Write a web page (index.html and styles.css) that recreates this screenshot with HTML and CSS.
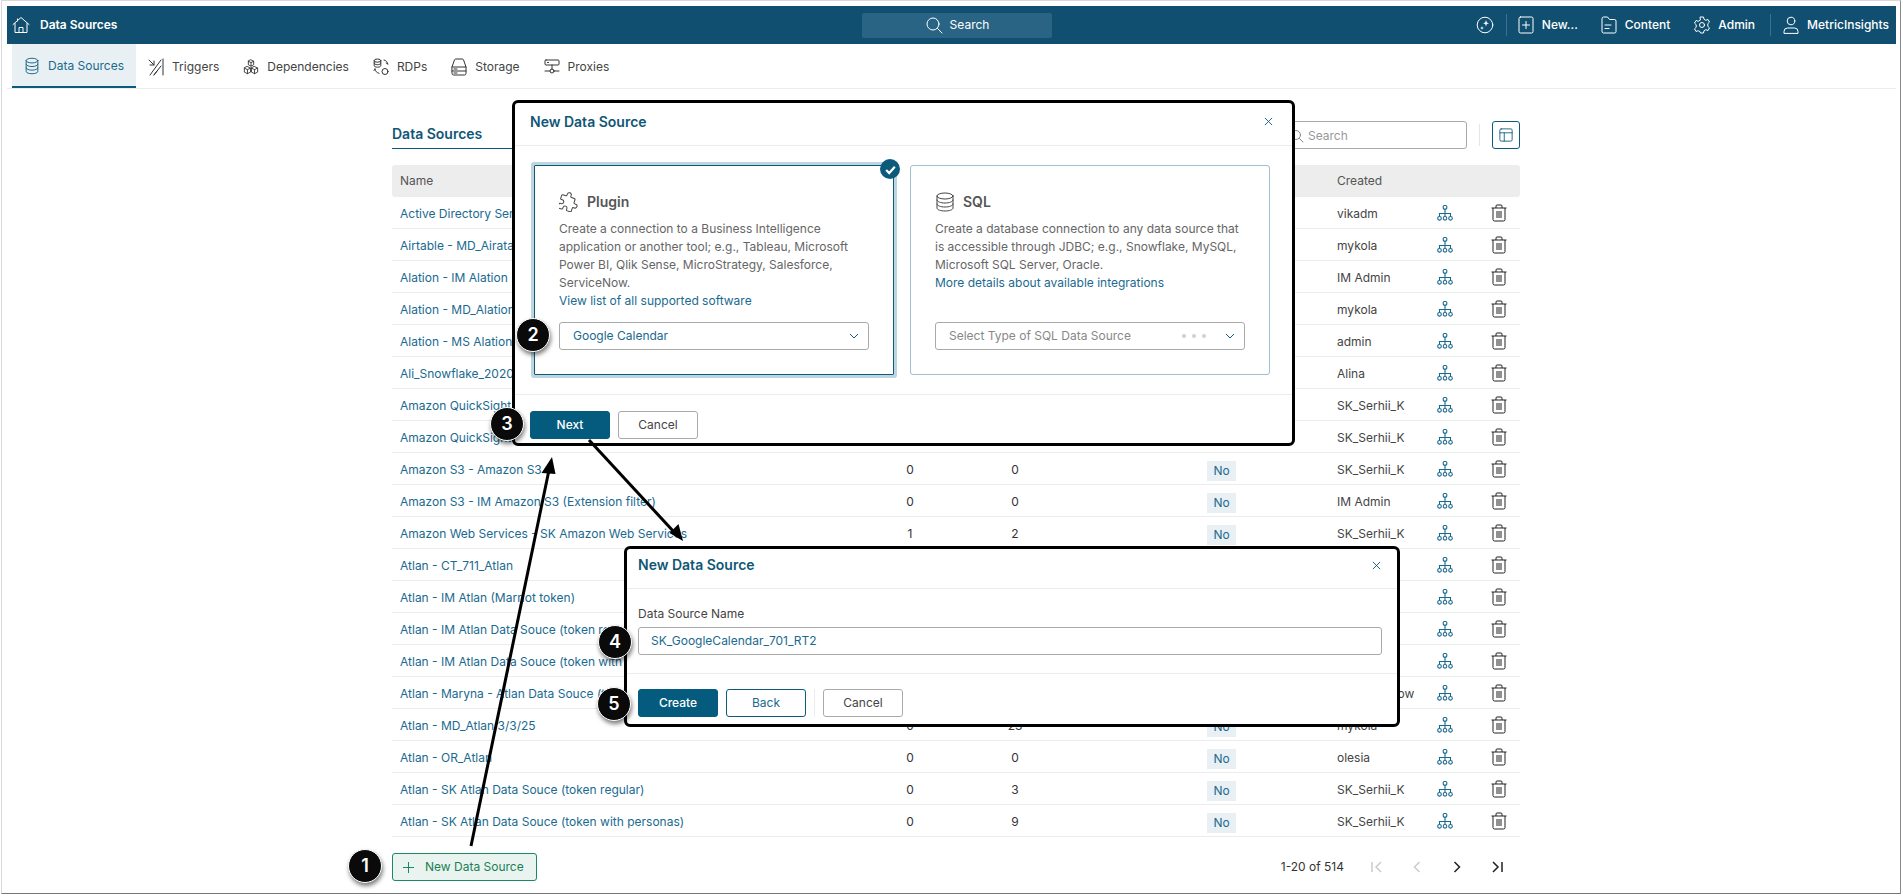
FILE: index.html
```html
<!DOCTYPE html>
<html lang="en">
<head>
<meta charset="utf-8">
<title>Data Sources</title>
<link rel="stylesheet" href="styles.css">
</head>
<body>
<svg class="sprite" aria-hidden="true">
  <symbol id="i-db" viewBox="0 0 16 20"><ellipse cx="8" cy="4" rx="6.5" ry="2.6"/><path d="M1.5 4v12c0 1.5 3 2.6 6.5 2.6s6.5-1.1 6.5-2.6V4M1.5 8c0 1.5 3 2.6 6.5 2.6s6.5-1.1 6.5-2.6M1.5 12c0 1.5 3 2.6 6.5 2.6s6.5-1.1 6.5-2.6"/></symbol>
  <symbol id="i-org" viewBox="0 0 16 18"><rect x="6.2" y="1.500" width="3.6" height="3.6" rx="1"/><path d="M8 5.100V9.500M2.500 12.500v-3h11v3M8 9.500v3"/><circle cx="2.500" cy="14.300" r="1.800"/><circle cx="8" cy="14.300" r="1.800"/><circle cx="13.500" cy="14.300" r="1.800"/></symbol>
  <symbol id="i-trash" viewBox="0 0 16 18"><path d="M.5 4h15M2 4v11.500A1.500 1.500 0 0 0 3.500 17h9a1.500 1.500 0 0 0 1.500-1.500V4M5 4V2a1 1 0 0 1 1-1h4a1 1 0 0 1 1 1v2M6 7v7M8 7v7M10 7v7"/></symbol>
  <symbol id="i-x" viewBox="0 0 10 10"><path d="M1 1l8 8M9 1l-8 8"/></symbol>
  <symbol id="i-chev" viewBox="0 0 10 6"><path d="M1 1l4 4 4-4"/></symbol>
</svg>

<div class="frame">
  <header class="topbar">
    <div class="brand">
      <svg class="ic ic-w" viewBox="0 0 18 18"><path d="M1 8.500L9 1.500l8 7M3 7.500V16.500h12V7.500M7 16.500v-5h4v5M5.500 5V3"/></svg>
      <span>Data Sources</span>
    </div>
    <div class="searchbar">
      <svg class="ic ic-w" viewBox="0 0 18 18"><circle cx="8" cy="8" r="6"/><path d="M12.500 12.500L17 17"/></svg>
      <span>Search</span>
    </div>
    <nav class="topnav">
      <svg class="ic ic-w" viewBox="0 0 18 18"><circle cx="9" cy="9" r="7.800"/><path class="fillw" d="M10 4l.8 2.400L13 7.200l-2.200.8L10 10.400 9.200 8 7 7.200l2.200-.8zM6 10l.5 1.500L8 12l-1.500.5L6 14l-.5-1.500L4 12l1.500-.5z"/></svg>
      <i class="tsep tsep-a"></i>
      <span class="titem"><svg class="ic ic-w" viewBox="0 0 16 18"><rect x="1" y="1" width="14" height="16" rx="1.500"/><path d="M8 5.500v7M4.500 9h7"/></svg>New...</span>
      <span class="titem titem-c"><svg class="ic ic-w" viewBox="0 0 16 18"><path d="M1 2.500A1.500 1.500 0 0 1 2.500 1h4l2 2.500h5A1.500 1.500 0 0 1 15 5v10.500a1.500 1.500 0 0 1-1.500 1.500h-11A1.500 1.500 0 0 1 1 15.500zM4 9h6M4 12.500h4"/></svg>Content</span>
      <span class="titem titem-a"><svg class="ic ic-w" viewBox="0 0 18 18"><circle cx="9" cy="9" r="2.500"/><path d="M7.500 1h3l.5 2.300 1.800 1 2.200-.8 1.500 2.600-1.700 1.600v2.600l1.700 1.600-1.500 2.600-2.200-.8-1.800 1-.5 2.300h-3L7 15.700l-1.800-1-2.200.8-1.500-2.600 1.700-1.600V8.700L1.500 7.100 3 4.500l2.200.8 1.800-1z"/></svg>Admin</span>
      <i class="tsep tsep-b"></i>
      <span class="titem titem-u"><svg class="ic ic-w" viewBox="0 0 18 18"><circle cx="9" cy="5" r="3.800"/><path d="M2 17v-1.500A3.500 3.500 0 0 1 5.500 12h7a3.500 3.500 0 0 1 3.500 3.500V17z"/></svg>MetricInsights</span>
    </nav>
  </header>

  <nav class="tabs">
    <a class="tab tab-on"><svg class="ic ic-b"><use href="#i-db"/></svg>Data Sources</a>
    <a class="tab"><svg class="ic ic-d" viewBox="0 0 16 18"><path d="M15 1v16M1 2l5 5M6 3v4H2M13 2L2 17M13 8L6 17M9 13l-3 4"/></svg>Triggers</a>
    <a class="tab"><svg class="ic ic-d" viewBox="0 0 18 17"><path d="M9 .5l3 1.500v4L9 7.500 6 6V2zM6 2l3 1.500L12 2M9 3.500v4M5 8l3.500 1.700v4.500L5 16l-3.500-1.800V9.700zM1.500 9.700L5 11.500l3.500-1.800M5 11.500V16M13 8l3.500 1.700v4.500L13 16l-3.500-1.800V9.700zM9.500 9.700l3.500 1.800 3.500-1.800M13 11.500V16"/></svg>Dependencies</a>
    <a class="tab"><svg class="ic ic-d" viewBox="0 0 16 18"><ellipse cx="4.500" cy="2.600" rx="3.300" ry="1.600"/><path d="M1.200 2.600v5c0 .9 1.500 1.600 3.300 1.600s3.300-.7 3.300-1.600v-5M1.200 5.100c0 .9 1.500 1.600 3.300 1.600s3.300-.7 3.300-1.600M11 2c2 .5 3.500 1.800 3.800 4M14.800 6l-1.600-1M2 11c.3 2.300 1.700 3.700 4 4.300M2 11l-1 1.500"/><circle cx="12" cy="13.500" r="3"/></svg>RDPs</a>
    <a class="tab"><svg class="ic ic-d" viewBox="0 0 16 18"><path d="M1 9l2.500-7.200A1.200 1.200 0 0 1 4.600 1h6.800a1.200 1.200 0 0 1 1.100.8L15 9v6.500a1.500 1.500 0 0 1-1.500 1.500h-11A1.500 1.500 0 0 1 1 15.500zM1 9h14M1 13h14M3 11h3M3 15h3"/></svg>Storage</a>
    <a class="tab"><svg class="ic ic-d" viewBox="0 0 16 18"><rect x="1" y="2" width="14" height="5" rx="1"/><path d="M8 7v4M1 13h5M10 13h5M3.500 4.500h1"/><circle cx="8" cy="13" r="2"/></svg>Proxies</a>
  </nav>

  <main class="content">
    <div class="toolbar">
      <h1 class="page-title">Data Sources</h1>
      <div class="tsearch">
        <svg class="ic ic-g" viewBox="0 0 14 14"><circle cx="6" cy="6" r="4.500"/><path d="M9.500 9.500L13 13"/></svg>
        <span>Search</span>
      </div>
      <i class="vsep"></i>
      <button class="colbtn"><svg class="ic ic-b" viewBox="0 0 16 16"><rect x="1" y="1" width="14" height="14" rx="1.500"/><path d="M1 5.500h14M6 5.500V15"/></svg></button>
    </div>

    <div class="table">
      <div class="row head"><span>Name</span><span></span><span></span><span></span><span>Created</span><span></span><span></span></div>
      <div class="row"><a>Active Directory Service</a><span></span><span></span><span></span><span>vikadm</span><svg class="org"><use href="#i-org"/></svg><svg class="del"><use href="#i-trash"/></svg></div>
      <div class="row"><a>Airtable - MD_Airatable</a><span></span><span></span><span></span><span>mykola</span><svg class="org"><use href="#i-org"/></svg><svg class="del"><use href="#i-trash"/></svg></div>
      <div class="row"><a>Alation - IM Alation</a><span></span><span></span><span></span><span>IM Admin</span><svg class="org"><use href="#i-org"/></svg><svg class="del"><use href="#i-trash"/></svg></div>
      <div class="row"><a>Alation - MD_Alation</a><span></span><span></span><span></span><span>mykola</span><svg class="org"><use href="#i-org"/></svg><svg class="del"><use href="#i-trash"/></svg></div>
      <div class="row"><a>Alation - MS Alation</a><span></span><span></span><span></span><span>admin</span><svg class="org"><use href="#i-org"/></svg><svg class="del"><use href="#i-trash"/></svg></div>
      <div class="row"><a>Ali_Snowflake_2020</a><span></span><span></span><span></span><span>Alina</span><svg class="org"><use href="#i-org"/></svg><svg class="del"><use href="#i-trash"/></svg></div>
      <div class="row"><a>Amazon QuickSight</a><span></span><span></span><span></span><span>SK_Serhii_K</span><svg class="org"><use href="#i-org"/></svg><svg class="del"><use href="#i-trash"/></svg></div>
      <div class="row"><a>Amazon QuickSight</a><span></span><span></span><span></span><span>SK_Serhii_K</span><svg class="org"><use href="#i-org"/></svg><svg class="del"><use href="#i-trash"/></svg></div>
      <div class="row"><a>Amazon S3 - Amazon S3</a><span class="num">0</span><span class="num">0</span><b class="no">No</b><span>SK_Serhii_K</span><svg class="org"><use href="#i-org"/></svg><svg class="del"><use href="#i-trash"/></svg></div>
      <div class="row"><a>Amazon S3 - IM Amazon S3 (Extension filter)</a><span class="num">0</span><span class="num">0</span><b class="no">No</b><span>IM Admin</span><svg class="org"><use href="#i-org"/></svg><svg class="del"><use href="#i-trash"/></svg></div>
      <div class="row"><a>Amazon Web Services - SK Amazon Web Services</a><span class="num">1</span><span class="num">2</span><b class="no">No</b><span>SK_Serhii_K</span><svg class="org"><use href="#i-org"/></svg><svg class="del"><use href="#i-trash"/></svg></div>
      <div class="row"><a>Atlan - CT_711_Atlan</a><span></span><span></span><span></span><span></span><svg class="org"><use href="#i-org"/></svg><svg class="del"><use href="#i-trash"/></svg></div>
      <div class="row"><a>Atlan - IM Atlan (Marriot token)</a><span></span><span></span><span></span><span></span><svg class="org"><use href="#i-org"/></svg><svg class="del"><use href="#i-trash"/></svg></div>
      <div class="row"><a>Atlan - IM Atlan Data Souce (token regular)</a><span></span><span></span><span></span><span></span><svg class="org"><use href="#i-org"/></svg><svg class="del"><use href="#i-trash"/></svg></div>
      <div class="row"><a>Atlan - IM Atlan Data Souce (token with personas)</a><span></span><span></span><span></span><span></span><svg class="org"><use href="#i-org"/></svg><svg class="del"><use href="#i-trash"/></svg></div>
      <div class="row"><a>Atlan - Maryna - Atlan Data Souce (token)</a><span></span><span></span><span></span><span>mkovalenkow</span><svg class="org"><use href="#i-org"/></svg><svg class="del"><use href="#i-trash"/></svg></div>
      <div class="row"><a>Atlan - MD_Atlan 3/3/25</a><span class="num">0</span><span class="num">23</span><b class="no">No</b><span>mykola</span><svg class="org"><use href="#i-org"/></svg><svg class="del"><use href="#i-trash"/></svg></div>
      <div class="row"><a>Atlan - OR_Atlan</a><span class="num">0</span><span class="num">0</span><b class="no">No</b><span>olesia</span><svg class="org"><use href="#i-org"/></svg><svg class="del"><use href="#i-trash"/></svg></div>
      <div class="row"><a>Atlan - SK Atlan Data Souce (token regular)</a><span class="num">0</span><span class="num">3</span><b class="no">No</b><span>SK_Serhii_K</span><svg class="org"><use href="#i-org"/></svg><svg class="del"><use href="#i-trash"/></svg></div>
      <div class="row"><a>Atlan - SK Atlan Data Souce (token with personas)</a><span class="num">0</span><span class="num">9</span><b class="no">No</b><span>SK_Serhii_K</span><svg class="org"><use href="#i-org"/></svg><svg class="del"><use href="#i-trash"/></svg></div>
    </div>

    <div class="tfoot">
      <button class="newbtn"><svg viewBox="0 0 12 12"><path d="M6 0v12M0 6h12"/></svg>New Data Source</button>
      <div class="pager">
        <span class="pcount">1-20 of 514</span>
        <svg class="pg pg-off" viewBox="0 0 14 14"><path d="M2 2v10M11 2L6 7l5 5"/></svg>
        <svg class="pg pg-off" viewBox="0 0 14 14"><path d="M9.500 2l-5 5 5 5"/></svg>
        <svg class="pg" viewBox="0 0 14 14"><path d="M4.500 2l5 5-5 5"/></svg>
        <svg class="pg" viewBox="0 0 14 14"><path d="M3 2l5 5-5 5M12 2v10"/></svg>
      </div>
    </div>
  </main>
</div>

<section class="modal modal-a">
  <header class="mhead"><h2>New Data Source</h2><svg class="mx"><use href="#i-x"/></svg></header>
  <div class="mbody cards">
    <article class="card card-on">
      <span class="check"><svg viewBox="0 0 12 12"><path d="M2 6.500l2.800 2.800L10 3.500"/></svg></span>
      <div class="chead"><svg class="ic ic-p" viewBox="2 2 20 20"><path transform="rotate(18 12 12)" d="M4 7h3a1 1 0 0 0 1-1V5a2 2 0 0 1 4 0v1a1 1 0 0 0 1 1h3a1 1 0 0 1 1 1v3a1 1 0 0 0 1 1h1a2 2 0 0 1 0 4h-1a1 1 0 0 0-1 1v3a1 1 0 0 1-1 1h-3a1 1 0 0 1-1-1v-1a2 2 0 0 0-4 0v1a1 1 0 0 1-1 1H4a1 1 0 0 1-1-1v-3a1 1 0 0 1 1-1h1a2 2 0 0 0 0-4H4a1 1 0 0 1-1-1V8a1 1 0 0 1 1-1"/></svg><h3>Plugin</h3></div>
      <p>Create a connection to a Business Intelligence application or another tool; e.g., Tableau, Microsoft Power BI, Qlik Sense, MicroStrategy, Salesforce, ServiceNow.<br><a>View list of all supported software</a></p>
      <div class="select"><span>Google Calendar</span><svg class="chev"><use href="#i-chev"/></svg></div>
    </article>
    <article class="card">
      <div class="chead"><svg class="ic ic-p" viewBox="0 0 18 20"><ellipse cx="9" cy="4" rx="8" ry="3"/><path d="M1 4v12c0 1.700 3.600 3 8 3s8-1.300 8-3V4M1 8c0 1.700 3.600 3 8 3s8-1.300 8-3M1 12c0 1.700 3.600 3 8 3s8-1.300 8-3"/></svg><h3>SQL</h3></div>
      <p>Create a database connection to any data source that is accessible through JDBC; e.g., Snowflake, MySQL, Microsoft SQL Server, Oracle.<br><a>More details about available integrations</a></p>
      <div class="select select-ph"><span>Select Type of SQL Data Source</span><i class="dots"><u></u><u></u><u></u></i><svg class="chev"><use href="#i-chev"/></svg></div>
    </article>
  </div>
  <footer class="mfoot">
    <button class="btn btn-pri">Next</button>
    <button class="btn">Cancel</button>
  </footer>
</section>

<section class="modal modal-b">
  <header class="mhead"><h2>New Data Source</h2><svg class="mx"><use href="#i-x"/></svg></header>
  <div class="mbody form">
    <label class="flabel">Data Source Name</label>
    <div class="finput">SK_GoogleCalendar_701_RT2</div>
  </div>
  <footer class="mfoot">
    <button class="btn btn-pri">Create</button>
    <button class="btn btn-sec">Back</button>
    <i class="fsep"></i>
    <button class="btn">Cancel</button>
  </footer>
</section>

<svg class="arrows" viewBox="0 0 1903 896" aria-hidden="true">
  <path class="aline" d="M471 846L549 470"/>
  <polygon points="552,457 541.500,473 555.500,474"/>
  <path class="aline" d="M589 440L674 532"/>
  <polygon points="683,541 669.500,533 678.500,524"/>
</svg>

<span class="step step-1">1</span>
<span class="step step-2">2</span>
<span class="step step-3">3</span>
<span class="step step-4">4</span>
<span class="step step-5">5</span>
</body>
</html>
```

FILE: styles.css
```css
* { box-sizing: border-box; }
html, body { margin: 0; padding: 0; height: 896px; overflow: hidden; background: #fff; }
body { font: 400 12px/18px Inter, "Liberation Sans", sans-serif; color: #444; position: relative; }
h1, h2, h3, p { margin: 0; }
a { color: #1a6a8f; }
button { font: inherit; cursor: pointer; }
.sprite { position: absolute; width: 0; height: 0; }

.ic { width: 16px; height: 18px; flex: none; fill: none; stroke-width: 1; stroke-linejoin: round; stroke-linecap: round; }
.ic-w { stroke: #fff; }
.ic-b { stroke: #0e5a7c; }
.ic-d { stroke: #333; }
.ic-g { stroke: #888; width: 14px; height: 14px; }
.ic-p { stroke: #444; width: 20px; height: 20px; }
.fillw { fill: #fff; stroke: none; }

.frame {
  margin-left: 1px; width: 1900px; height: 894px;
  border: 1px solid #d8d8d8; border-right-color: #8a8a8a; border-bottom-color: #777;
  padding: 5px 4px 0 5px;
}

.topbar {
  height: 38px; background: #114f70; color: #fff; font-weight: 600;
  display: flex; align-items: center; padding: 0 7px 0 5px; position: relative;
}
.brand { display: flex; align-items: center; gap: 10px; width: 850px; }
.brand .ic { width: 18px; height: 18px; }
.searchbar {
  width: 190px; height: 25px; background: #2a6484; border-radius: 2px; font-weight: 400;
  display: flex; align-items: center; justify-content: center; gap: 7px; padding-bottom: 1px;
}
.searchbar .ic { width: 18px; height: 18px; }
.topnav { margin-left: auto; display: flex; align-items: center; font-weight: 500; }
.topnav > .ic { width: 18px; height: 18px; }
.titem { display: flex; align-items: center; gap: 8px; }
.tsep { width: 1px; height: 22px; background: #3d7190; }
.tsep-a { margin: 0 11px 0 12px; }
.tsep-b { margin: 0 11px 0 15px; }
.titem-c { margin-left: 23px; }
.titem-a { margin-left: 23px; gap: 7px; }
.titem-a .ic, .titem-u .ic { width: 18px; height: 18px; }
.titem-u { gap: 7px; }

.tabs { display: flex; height: 45px; padding-left: 5px; border-bottom: 1px solid #ececec; }
.tab { display: flex; align-items: center; gap: 8px; padding: 2px 12px 0; color: #444; }
.tab-on { color: #1a6a8f; background: #e8f0f4; border-bottom: 2px solid #0e5a7c; }

.content { margin: 32px 0 0 385px; width: 1128px; }
.toolbar { display: flex; align-items: center; height: 28px; }
.page-title {
  font-size: 14px; font-weight: 600; line-height: 26px; color: #0f5776;
  width: 200px; height: 28px; border-bottom: 1px solid #0e5a7c;
}
.tsearch {
  margin-left: auto; width: 184px; height: 28px; border: 1px solid #aaa; border-radius: 3px;
  display: flex; align-items: center; gap: 4px; padding: 1px 0 0 6px; color: #999;
}
.vsep { width: 1px; height: 22px; background: #e5e5e5; margin: 0 12px; }
.colbtn {
  width: 28px; height: 28px; border: 1px solid #0e5a7c; border-radius: 3px; background: #fff;
  padding: 0; display: flex; align-items: center; justify-content: center;
}
.colbtn .ic { width: 14px; height: 14px; }

.table { margin-top: 16px; }
.row {
  display: grid; height: 32px; padding-top: 2px; align-items: center; border-bottom: 1px solid #ececec;
  grid-template-columns: 488px 60px 150px 247px 88px 40px 55px;
}
.row > :first-child { padding-left: 8px; white-space: nowrap; }
.row > :nth-child(5) { white-space: nowrap; }
.head { background: #ededed; border: 0; border-radius: 3px; color: #555; padding-top: 0; }
.num { text-align: center; color: #333; }
.no {
  justify-self: start; margin: 2px 0 0 117px; width: 29px; height: 20px; background: #e8f0f4;
  color: #1a6a8f; font-weight: 400; text-align: center; line-height: 20px;
}
.org, .del { width: 16px; height: 18px; fill: none; stroke-width: 1; margin-top: -2px; }
.org { stroke: #1a6a8f; justify-self: center; stroke-width: 1.100; }
.del { stroke: #222; justify-self: start; margin-left: 26px; }

.tfoot { margin-top: 16px; display: flex; align-items: center; justify-content: space-between; height: 28px; }
.newbtn {
  width: 145px; height: 28px; background: #e9f4f0; border: 1px solid #1b8a5c; border-radius: 3px;
  color: #1b7f55; display: flex; align-items: center; gap: 11px; padding: 0 0 0 10px;
}
.newbtn svg { width: 11px; height: 11px; stroke: #1b8a5c; fill: none; stroke-width: 1.100; }
.pager { display: flex; align-items: center; gap: 26px; padding-right: 16px; color: #333; }
.pg { width: 14px; height: 14px; fill: none; stroke: #222; stroke-width: 1.500; }
.pg-off { stroke: #ccc; }

.modal {
  position: absolute; background: #fff; border: 3px solid #000; border-radius: 6px;
  display: flex; flex-direction: column;
}
.modal-a { left: 512px; top: 100px; width: 783px; height: 346px; }
.modal-b { left: 624px; top: 546px; width: 776px; height: 181px; }
.mhead {
  flex: none; display: flex; align-items: center; justify-content: space-between;
  border-bottom: 1px solid #ececec;
}
.modal-a .mhead { height: 43px; padding: 0 19px 5px 15px; }
.modal-b .mhead { height: 40px; padding: 0 16px 7px 11px; }
.mhead h2 { font-size: 14px; font-weight: 600; color: #0f5776; }
.mx { width: 9px; height: 9px; fill: none; stroke: #0e5a7c; stroke-width: 1; }
.mbody { flex: none; border-bottom: 1px solid #ececec; }
.cards { height: 249px; padding: 19px 19px 0; display: flex; gap: 16px; }
.card {
  width: 360px; height: 210px; border: 1px solid #9fc0ce; border-radius: 3px; position: relative;
  padding: 26px 24px 24px; display: flex; flex-direction: column;
}
.card-on { border: 1.500px solid #0e5a7c; border-radius: 1px; box-shadow: 0 0 0 3px #bcd5df; }
.check {
  position: absolute; right: -7px; top: -7px; width: 20px; height: 20px; border-radius: 50%;
  background: #0b5a7c; display: flex; align-items: center; justify-content: center;
}
.check svg { width: 13px; height: 13px; fill: none; stroke: #fff; stroke-width: 2; }
.chead { display: flex; align-items: center; gap: 8px; height: 20px; }
.chead h3 { font-size: 14px; font-weight: 600; color: #555; }
.card p { margin-top: 8px; color: #666; }
.select {
  margin-top: auto; height: 28px; border: 1px solid #aaa; border-radius: 3px; color: #1a6a8f;
  display: flex; align-items: center; padding: 0 9px 0 13px;
}
.select-ph { color: #888; }
.chev { margin-left: auto; width: 10px; height: 6px; fill: none; stroke: #0e5a7c; stroke-width: 1; flex: none; }
.dots { margin-left: auto; display: flex; gap: 6px; margin-right: 19px; }
.dots u { width: 4px; height: 4px; border-radius: 50%; background: #d0d0d0; }
.dots + .chev { margin-left: 0; }
.form { height: 85px; padding: 16px 15px 0 11px; }
.flabel { display: block; color: #444; line-height: 18px; }
.finput {
  margin-top: 4px; height: 28px; border: 1px solid #aaa; border-radius: 3px; color: #1a6a8f;
  padding: 0 12px; line-height: 26px;
}
.mfoot { display: flex; align-items: flex-start; gap: 8px; padding: 16px 0 0 15px; }
.modal-b .mfoot { padding-left: 11px; padding-top: 15px; }
.btn { width: 80px; height: 28px; padding: 0; background: #fff; border: 1px solid #aaa; border-radius: 3px; color: #444; }
.btn-pri { background: #045b7e; border-color: #045b7e; color: #fff; font-weight: 500; }
.btn-sec { border-color: #0e5a7c; color: #1a6a8f; }
.fsep { width: 1px; height: 28px; background: #ececec; }

.arrows { position: absolute; left: 0; top: 0; width: 1903px; height: 896px; pointer-events: none; }
.arrows polygon { fill: #000; }
.aline { stroke: #000; stroke-width: 3; fill: none; }

.step {
  position: absolute; width: 34px; height: 34px; border-radius: 50%; background: #0a0a0a;
  border: 1px solid #fff; color: #fff; font: 600 18px/32px Inter, "Liberation Sans", sans-serif;
  text-align: center; box-shadow: 1px 3px 4px rgba(0,0,0,.5);
}
.step-1 { left: 348px; top: 849px; }
.step-2 { left: 516px; top: 318px; }
.step-3 { left: 490px; top: 407px; }
.step-4 { left: 598px; top: 625px; }
.step-5 { left: 597px; top: 687px; }
```
